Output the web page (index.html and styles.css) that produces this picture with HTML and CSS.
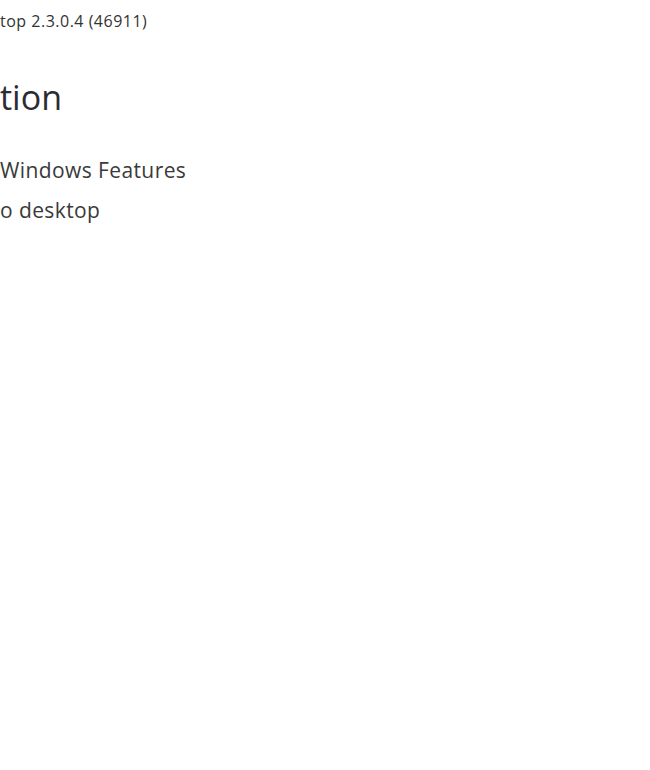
FILE: index.html
```html
<!DOCTYPE html>
<html lang="en">
<head>
  <meta charset="UTF-8">
  <title>Installer</title>
  <link rel="stylesheet" href="styles.css">
</head>
<body>
  <div class="installer">
    <div class="version">top 2.3.0.4 (46911)</div>
    <h1 class="title">tion</h1>
    <ul class="options">
      <li>Windows Features</li>
      <li>o desktop</li>
    </ul>
  </div>
</body>
</html>
```

FILE: styles.css
```css
body {
  margin: 0;
  background: #ffffff;
  font-family: 'Open Sans', 'Noto Sans', sans-serif;
  color: #333333;
  overflow: hidden;
}

.installer {
  padding-top: 10px;
}

.version {
  font-size: 16px;
  letter-spacing: 0.5px;
  line-height: 22px;
  color: #333333;
}

.title {
  font-size: 34px;
  font-weight: 400;
  line-height: 46px;
  margin: 42px 0 0;
  color: #2b2b33;
}

.options {
  list-style: none;
  margin: 30px 0 0;
  padding: 0;
}

.options li {
  font-size: 21px;
  letter-spacing: 0.4px;
  line-height: 40px;
  color: #3a3a3a;
}
```
